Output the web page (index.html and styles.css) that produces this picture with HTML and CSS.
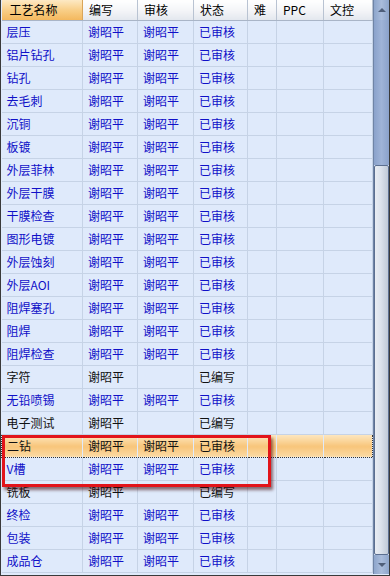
FILE: index.html
```html
<!DOCTYPE html>
<html lang="zh-CN">
<head>
    <meta charset="UTF-8">
    <title>工艺流程</title>
    <link rel="stylesheet" href="styles.css">
</head>
<body>

    <div class="frame">
        <div class="grid">
            <table class="flow">
                <colgroup>
                    <col class="c-name"><col class="c-edit"><col class="c-check"><col class="c-state">
                    <col class="c-hard"><col class="c-ppc"><col class="c-doc">
                </colgroup>
                <thead>
                    <tr>
                        <th class="sorted">工艺名称</th>
                        <th>编写</th>
                        <th>审核</th>
                        <th>状态</th>
                        <th>难</th>
                        <th>PPC</th>
                        <th>文控</th>
                    </tr>
                </thead>
                <tbody>
                    <tr class="done"><td>层压</td><td>谢昭平</td><td>谢昭平</td><td>已审核</td><td></td><td></td><td></td></tr>
                    <tr class="done"><td>铝片钻孔</td><td>谢昭平</td><td>谢昭平</td><td>已审核</td><td></td><td></td><td></td></tr>
                    <tr class="done"><td>钻孔</td><td>谢昭平</td><td>谢昭平</td><td>已审核</td><td></td><td></td><td></td></tr>
                    <tr class="done"><td>去毛刺</td><td>谢昭平</td><td>谢昭平</td><td>已审核</td><td></td><td></td><td></td></tr>
                    <tr class="done"><td>沉铜</td><td>谢昭平</td><td>谢昭平</td><td>已审核</td><td></td><td></td><td></td></tr>
                    <tr class="done"><td>板镀</td><td>谢昭平</td><td>谢昭平</td><td>已审核</td><td></td><td></td><td></td></tr>
                    <tr class="done"><td>外层菲林</td><td>谢昭平</td><td>谢昭平</td><td>已审核</td><td></td><td></td><td></td></tr>
                    <tr class="done"><td>外层干膜</td><td>谢昭平</td><td>谢昭平</td><td>已审核</td><td></td><td></td><td></td></tr>
                    <tr class="done"><td>干膜检查</td><td>谢昭平</td><td>谢昭平</td><td>已审核</td><td></td><td></td><td></td></tr>
                    <tr class="done"><td>图形电镀</td><td>谢昭平</td><td>谢昭平</td><td>已审核</td><td></td><td></td><td></td></tr>
                    <tr class="done"><td>外层蚀刻</td><td>谢昭平</td><td>谢昭平</td><td>已审核</td><td></td><td></td><td></td></tr>
                    <tr class="done"><td>外层AOI</td><td>谢昭平</td><td>谢昭平</td><td>已审核</td><td></td><td></td><td></td></tr>
                    <tr class="done"><td>阻焊塞孔</td><td>谢昭平</td><td>谢昭平</td><td>已审核</td><td></td><td></td><td></td></tr>
                    <tr class="done"><td>阻焊</td><td>谢昭平</td><td>谢昭平</td><td>已审核</td><td></td><td></td><td></td></tr>
                    <tr class="done"><td>阻焊检查</td><td>谢昭平</td><td>谢昭平</td><td>已审核</td><td></td><td></td><td></td></tr>
                    <tr class="draft"><td>字符</td><td>谢昭平</td><td></td><td>已编写</td><td></td><td></td><td></td></tr>
                    <tr class="done"><td>无铅喷锡</td><td>谢昭平</td><td>谢昭平</td><td>已审核</td><td></td><td></td><td></td></tr>
                    <tr class="draft"><td>电子测试</td><td>谢昭平</td><td></td><td>已编写</td><td></td><td></td><td></td></tr>
                    <tr class="selected"><td>二钻</td><td>谢昭平</td><td>谢昭平</td><td>已审核</td><td></td><td></td><td></td></tr>
                    <tr class="done"><td>V槽</td><td>谢昭平</td><td>谢昭平</td><td>已审核</td><td></td><td></td><td></td></tr>
                    <tr class="draft"><td>铣板</td><td>谢昭平</td><td></td><td>已编写</td><td></td><td></td><td></td></tr>
                    <tr class="done"><td>终检</td><td>谢昭平</td><td>谢昭平</td><td>已审核</td><td></td><td></td><td></td></tr>
                    <tr class="done"><td>包装</td><td>谢昭平</td><td>谢昭平</td><td>已审核</td><td></td><td></td><td></td></tr>
                    <tr class="done"><td>成品仓</td><td>谢昭平</td><td>谢昭平</td><td>已审核</td><td></td><td></td><td></td></tr>
                </tbody>
            </table>

            <div class="scrollbar">
                <div class="sb-btn sb-up"><span class="tri-up"></span></div>
                <div class="sb-track"></div>
                <div class="sb-thumb"></div>
                <div class="sb-btn sb-down"><span class="tri-down"></span></div>
            </div>
        </div>

        <!-- red marker drawn over the two rows -->
        <div class="marker"></div>
    </div>

</body>
</html>
```

FILE: styles.css
```css
body {
    margin: 0;
    padding: 0;
    font-family: "Noto Sans CJK SC", "DejaVu Sans", sans-serif;
    font-size: 12px;
}
.frame {
    position: relative;
    width: 390px;
    height: 576px;
    box-sizing: border-box;
    border: 1px solid #3a3a3a;
    border-top: none;
    background-color: #dfeafb;
    overflow: hidden;
}
.grid {
    display: flex;
    height: 574px;
}
.flow {
    width: 371px;
    border-collapse: collapse;
    table-layout: fixed;
    align-self: flex-start;
}
.c-name { width: 81px; }
.c-edit { width: 55px; }
.c-check { width: 56px; }
.c-state { width: 54px; }
.c-hard { width: 29px; }
.c-ppc { width: 47px; }
.c-doc { width: 49px; }

.flow th {
    height: 20px;
    padding: 0 0 0 6px;
    box-sizing: border-box;
    text-align: left;
    font-weight: normal;
    color: #000;
    background: linear-gradient(#ffffff, #f3f4f7 55%, #e3e7ee);
    border-right: 1px solid #b9c3d2;
    border-bottom: 1px solid #a9b5c7;
    line-height: 19px;
    white-space: nowrap;
    overflow: hidden;
}
.flow th.sorted {
    padding-left: 8px;
    background: linear-gradient(#fde9c4, #f9cf88 50%, #f4b85e);
    border-right-color: #d9a55a;
}
.flow td {
    height: 23px;
    padding: 0 0 0 5px;
    box-sizing: border-box;
    border-right: 1px solid #c6d3e6;
    border-bottom: 1px solid #c6d3e6;
    line-height: 22px;
    white-space: nowrap;
    overflow: hidden;
}
.flow tr.done td {
    color: #1010c8;
}
.flow tr.draft td {
    color: #111;
}
.flow tr.selected td {
    color: #111;
    background: linear-gradient(#fde8c2, #f8c57a 55%, #fbd9a2);
    border-top: 1px dotted #333;
    border-bottom: 1px dotted #333;
    border-right-color: transparent;
}
.flow tr.selected td:first-child {
    border-left: 1px dotted #333;
}
.flow tr.selected td:last-child {
    border-right: 1px dotted #333;
}

.scrollbar {
    width: 17px;
    display: flex;
    flex-direction: column;
    border-left: 1px solid #6f84a6;
    box-sizing: border-box;
}
.sb-btn {
    display: flex;
    align-items: center;
    justify-content: center;
    background: linear-gradient(90deg, #8ea6cc, #a9bcdb 50%, #8ea6cc);
}
.sb-up {
    height: 20px;
}
.sb-down {
    height: 19px;
}
.tri-up {
    width: 0;
    height: 0;
    border-left: 4px solid transparent;
    border-right: 4px solid transparent;
    border-bottom: 4px solid #4f5f7a;
}
.tri-down {
    width: 0;
    height: 0;
    border-left: 4px solid transparent;
    border-right: 4px solid transparent;
    border-top: 4px solid #4f5f7a;
}
.sb-track {
    height: 145px;
    background: linear-gradient(90deg, #8aa2cb, #9fb4d8 50%, #8aa2cb);
}
.sb-thumb {
    flex: 1;
    box-sizing: border-box;
    border: 1px solid #5b6f90;
    border-radius: 2px;
    background: linear-gradient(90deg, #e9edf3, #dbe2ec 45%, #c0cad8);
}

.marker {
    position: absolute;
    left: 1px;
    top: 435px;
    width: 269px;
    height: 52px;
    box-sizing: border-box;
    border: 3px solid #e2141a;
    box-shadow: 2px 3px 3px rgba(60, 0, 0, 0.55);
}
```
